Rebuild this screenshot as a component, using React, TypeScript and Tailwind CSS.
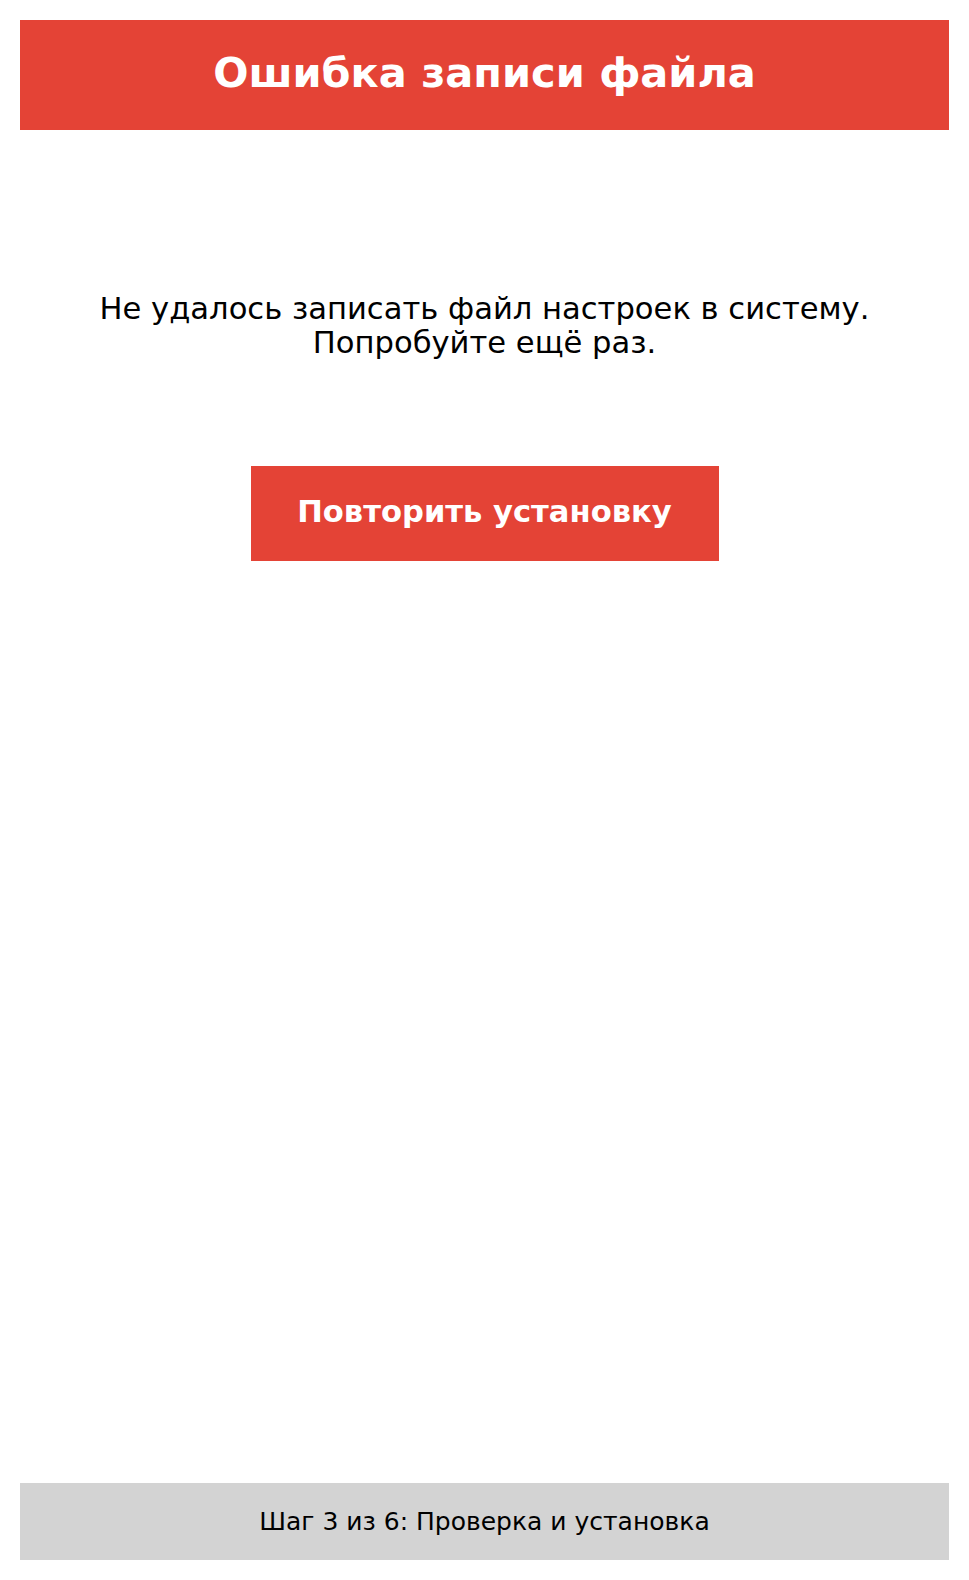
import React from 'react';

export default function App() {
  return (
    <div className="min-h-screen bg-white p-5 flex flex-col font-['DejaVu_Sans',sans-serif]">
      {/* Header */}
      <div className="h-[110px] pb-[5px] bg-[#e44336] flex items-center justify-center">
        <h1 className="text-[41.5px] font-bold text-white leading-none">Ошибка записи файла</h1>
      </div>

      {/* Message */}
      <p className="mt-[162px] text-center text-[30.6px] leading-[34px] text-black">
        Не удалось записать файл настроек в систему.
        <br />
        Попробуйте ещё раз.
      </p>

      <div className="mt-[106px] flex justify-center">
        <button className="w-[468px] h-[95px] pb-[4px] bg-[#e44336] text-white text-[30.6px] font-bold">
          Повторить установку
        </button>
      </div>

      {/* Footer */}
      <div className="mt-auto h-[77px] bg-[#d3d3d3] flex items-center justify-center">
        <span className="text-[25px] text-black">Шаг 3 из 6: Проверка и установка</span>
      </div>
    </div>
  );
}
